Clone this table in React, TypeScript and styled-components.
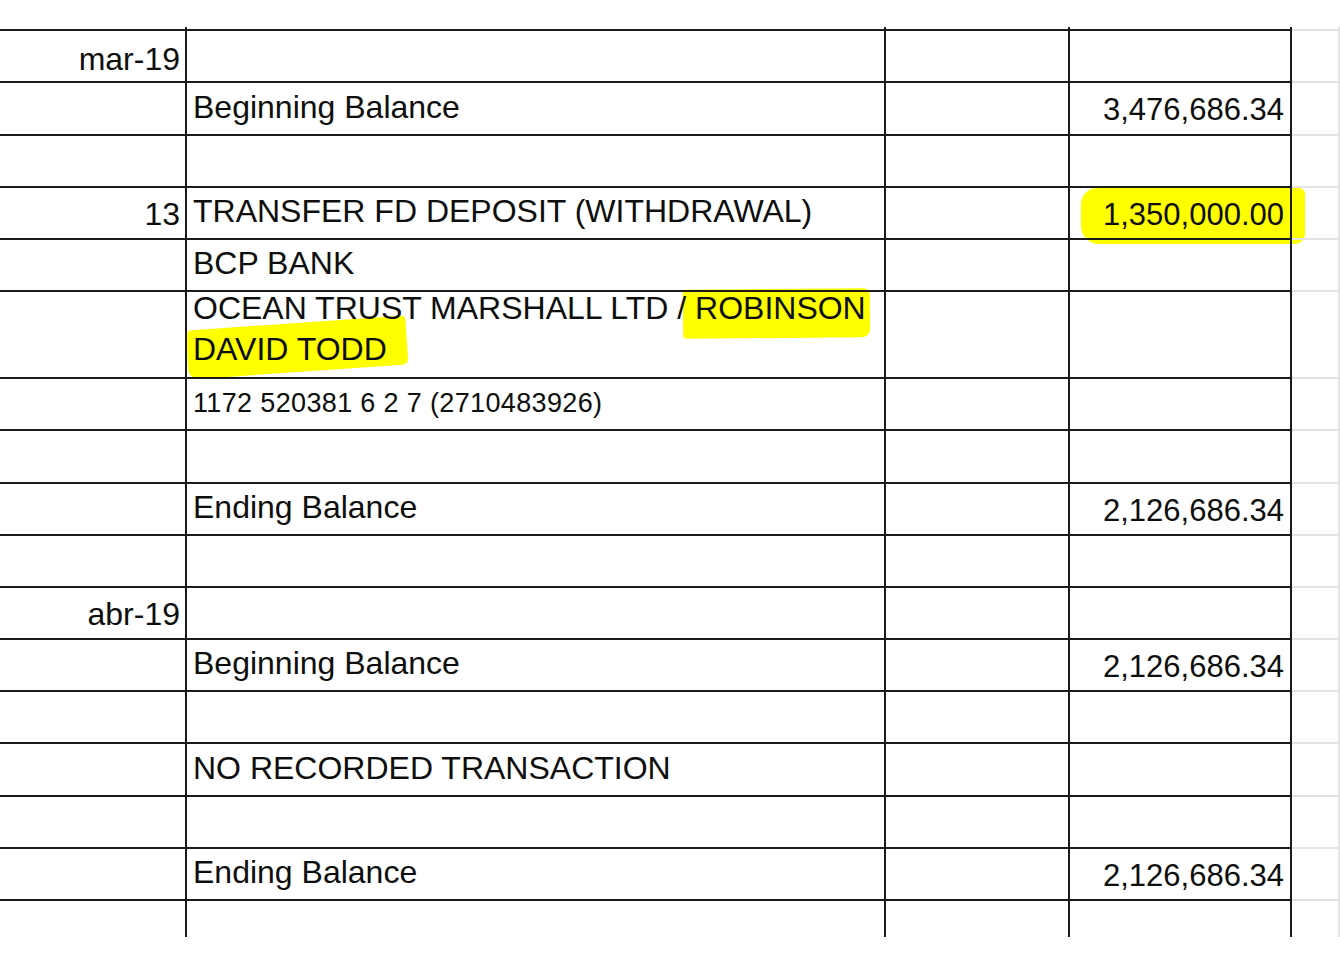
import React from "react";
import styled, { createGlobalStyle } from "styled-components";

const GlobalStyle = createGlobalStyle`
  html, body { margin: 0; padding: 0; }
  body {
    background: #ffffff;
    font-family: "Liberation Sans", Arial, sans-serif;
    color: #0e0e0e;
  }
`;

const DARK = "#1a1a1a";
const LIGHT = "#e3e3e3";

const Sheet = styled.div`
  padding-top: 27px;
  width: 1340px;
`;

const Row = styled.div<{ $h: number }>`
  display: grid;
  grid-template-columns: 187px 699px 184px 222px 48px;
  height: ${(p) => p.$h}px;
`;

const Cell = styled.div<{ $open?: boolean }>`
  box-sizing: border-box;
  border-top: ${(p) => (p.$open ? "none" : `2px solid ${DARK}`)};
  border-right: 2px solid ${DARK};
  display: flex;
  align-items: center;
  min-width: 0;
  font-size: 32px;
  white-space: nowrap;
`;

const DateCell = styled(Cell)<{ $drop?: number }>`
  justify-content: flex-end;
  padding: ${(p) => p.$drop ?? 2}px 5px 0 0;
`;

const DescCell = styled(Cell)<{ $small?: boolean; $stack?: boolean }>`
  padding: 0 6px ${(p) => (p.$small ? 1 : 3)}px 6px;
  font-size: ${(p) => (p.$small ? 27 : 32)}px;
  letter-spacing: ${(p) => (p.$small ? "0.35px" : "0")};
  align-items: ${(p) => (p.$stack ? "flex-start" : "center")};
`;

const AmountCell = styled(Cell)`
  justify-content: flex-end;
  padding: 3px 6px 0 0;
  font-size: 31px;
`;

const GhostCell = styled.div<{ $open?: boolean }>`
  box-sizing: border-box;
  border-top: ${(p) => (p.$open ? "none" : `2px solid ${LIGHT}`)};
  border-right: 2px solid ${LIGHT};
`;

const Stack = styled.div`
  display: flex;
  flex-direction: column;
  margin-top: -4px;
  line-height: 41px;
`;

const Line = styled.span`
  display: block;
`;

const Mark = styled.span<{
  $t: number;
  $r: number;
  $b: number;
  $l: number;
  $rot?: number;
  $radius?: string;
}>`
  position: relative;
  &::before {
    content: "";
    position: absolute;
    top: ${(p) => p.$t}px;
    right: ${(p) => p.$r}px;
    bottom: ${(p) => p.$b}px;
    left: ${(p) => p.$l}px;
    background: #ffff00;
    border-radius: ${(p) => p.$radius ?? "4px"};
    transform: rotate(${(p) => p.$rot ?? 0}deg);
    z-index: -1;
  }
`;

type Entry = {
  h: number;
  date?: React.ReactNode;
  dateDrop?: number;
  desc?: React.ReactNode;
  small?: boolean;
  stack?: boolean;
  amount?: React.ReactNode;
};

const entries: Entry[] = [
  { h: 52, date: "mar-19", dateDrop: 7 },
  { h: 53, desc: "Beginning Balance", amount: "3,476,686.34" },
  { h: 52 },
  {
    h: 52,
    date: "13",
    dateDrop: 3,
    desc: "TRANSFER FD DEPOSIT (WITHDRAWAL)",
    amount: (
      <Mark $t={-9} $r={-21} $b={-11} $l={-22} $radius="16px 6px 10px 18px">
        1,350,000.00
      </Mark>
    ),
  },
  { h: 52, desc: "BCP BANK" },
  {
    h: 87,
    stack: true,
    desc: (
      <Stack>
        <Line>
          OCEAN TRUST MARSHALL LTD /{" "}
          <Mark $t={-1} $r={-4} $b={-12} $l={-12} $rot={-0.5} $radius="3px 6px 8px 3px">
            ROBINSON
          </Mark>
        </Line>
        <Line>
          <Mark $t={-8} $r={-20} $b={-5} $l={-6} $rot={-4} $radius="6px 4px 6px 10px">
            DAVID TODD
          </Mark>
        </Line>
      </Stack>
    ),
  },
  { h: 52, desc: "1172 520381 6 2 7 (2710483926)", small: true },
  { h: 53 },
  { h: 52, desc: "Ending Balance", amount: "2,126,686.34" },
  { h: 52 },
  { h: 52, date: "abr-19", dateDrop: 3 },
  { h: 52, desc: "Beginning Balance", amount: "2,126,686.34" },
  { h: 52 },
  { h: 53, desc: "NO RECORDED TRANSACTION" },
  { h: 52 },
  { h: 52, desc: "Ending Balance", amount: "2,126,686.34" },
  { h: 38 },
];

export default function App() {
  return (
    <>
      <GlobalStyle />
      <Sheet>
        <Row $h={2}>
          <DateCell $open $drop={0} />
          <DescCell $open />
          <Cell $open />
          <AmountCell $open />
          <GhostCell $open />
        </Row>
        {entries.map((e, i) => (
          <Row key={i} $h={e.h}>
            <DateCell $drop={e.dateDrop}>{e.date}</DateCell>
            <DescCell $small={e.small} $stack={e.stack}>
              {e.desc}
            </DescCell>
            <Cell />
            <AmountCell>{e.amount}</AmountCell>
            <GhostCell />
          </Row>
        ))}
      </Sheet>
    </>
  );
}
